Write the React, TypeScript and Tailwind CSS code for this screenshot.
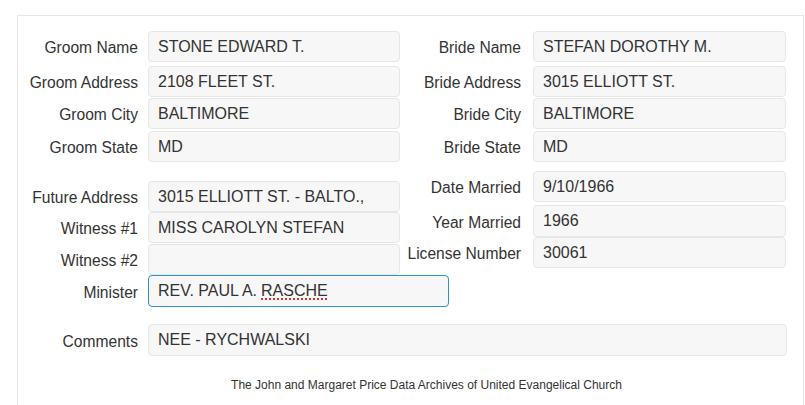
const font = { fontFamily: '"Liberation Sans", Arial, sans-serif' };

function Field({
  label,
  value,
  labelW,
  gap,
  inputW,
  className = "",
  h = "h-[31px]",
}: {
  label: string;
  value: React.ReactNode;
  labelW: string;
  gap: string;
  inputW: string;
  className?: string;
  h?: string;
}) {
  return (
    <div className={`flex items-center ${className}`}>
      <div className={`${labelW} shrink-0 text-right text-[15.6px] text-[#333] pt-[3px] ${gap}`}>{label}</div>
      <div
        className={`${inputW} ${h} shrink-0 flex items-center rounded-[4px] border border-[#e6e6e6] bg-[#f7f7f7] px-[9px] text-[16px] text-[#333]`}
      >
        {value}
      </div>
    </div>
  );
}

export default function App() {
  const L = { labelW: "w-[120px]", gap: "mr-[10px]", inputW: "w-[252px]" };
  const R = { labelW: "w-[121px]", gap: "mr-[12px]", inputW: "w-[253px]" };
  return (
    <div className="w-[805px] h-[405px] bg-white overflow-hidden pt-[15px]" style={font}>
      <div className="ml-[17px] w-[787px] h-[400px] border-t border-l border-r border-[#e5e5e5]">
        {/* top section */}
        <div className="flex">
          <div className="w-[382px] shrink-0 pt-[15px]">
            <Field label="Groom Name" value="STONE EDWARD T." {...L} />
            <Field label="Groom Address" value="2108 FLEET ST." {...L} className="mt-[4px]" />
            <Field label="Groom City" value="BALTIMORE" {...L} className="mt-[1px]" />
            <Field label="Groom State" value="MD" {...L} className="mt-[2px]" />
          </div>
          <div className="pt-[15px]">
            <Field label="Bride Name" value="STEFAN DOROTHY M." {...R} />
            <Field label="Bride Address" value="3015 ELLIOTT ST." {...R} className="mt-[4px]" />
            <Field label="Bride City" value="BALTIMORE" {...R} className="mt-[1px]" />
            <Field label="Bride State" value="MD" {...R} className="mt-[2px]" />
          </div>
        </div>

        {/* second section */}
        <div className="flex">
          <div className="w-[382px] shrink-0 pt-[19px]">
            <Field label="Future Address" value="3015 ELLIOTT ST. - BALTO.," {...L} />
            <Field label="Witness #1" value="MISS CAROLYN STEFAN" {...L} />
            <Field label="Witness #2" value="" {...L} className="mt-[1px]" />
            <div className="flex items-center">
              <div className="w-[120px] shrink-0 mr-[10px] text-right text-[15.6px] text-[#333] pt-[3px]">Minister</div>
              <div className="w-[301px] h-[32px] shrink-0 flex items-center rounded-[4px] border border-[#2b93d4] bg-[#f7f7f7] px-[9px] text-[16px] text-[#333]">
                REV. PAUL A.{" "}
                <span className="ml-[4px] underline decoration-dotted decoration-[#cc0000] underline-offset-[3px]">RASCHE</span>
              </div>
            </div>
          </div>
          <div className="pt-[9px]">
            <Field label="Date Married" value="9/10/1966" {...R} />
            <Field label="Year Married" value="1966" {...R} className="mt-[3px]" h="h-[32px]" />
            <Field label="License Number" value="30061" {...R} />
          </div>
        </div>

        {/* comments */}
        <div className="mt-[17px]">
          <Field label="Comments" value="NEE - RYCHWALSKI" labelW="w-[120px]" gap="mr-[10px]" inputW="w-[639px]" h="h-[32px]" />
        </div>

        <div className="mt-[20px] flex justify-center pl-[32px] text-[12px] text-[#333]">
          The John and Margaret Price Data Archives of United Evangelical Church
        </div>
      </div>
    </div>
  );
}
